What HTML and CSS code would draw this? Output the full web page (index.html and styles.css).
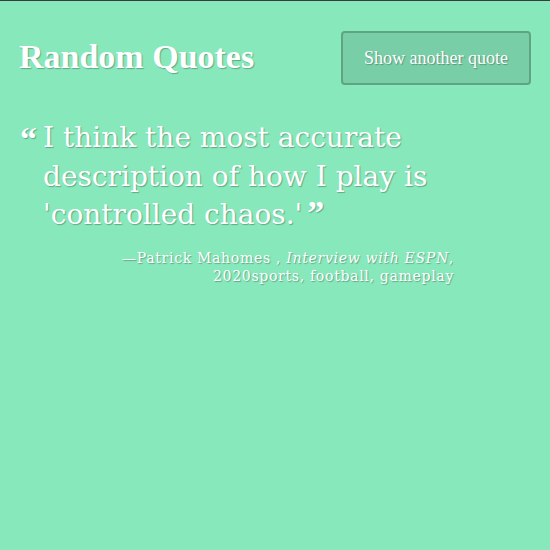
FILE: index.html
```html
<!DOCTYPE html>
<html lang="en">
<head>
<meta charset="utf-8">
<title>Random Quotes</title>
<link rel="stylesheet" href="styles.css">
</head>
<body>
<div class="page">
  <header class="top">
    <h1 class="title">Random Quotes</h1>
    <button class="btn" type="button">Show another quote</button>
  </header>
  <figure class="quote">
    <blockquote class="quote-body">
      <span class="mark mark-open">&ldquo;</span>
      <p class="quote-text">I think the most accurate description of how I play is 'controlled chaos.'<span class="mark mark-close">&rdquo;</span></p>
    </blockquote>
    <figcaption class="cite">&mdash;Patrick Mahomes , <em>Interview with ESPN</em>,<br>2020sports, football, gameplay</figcaption>
  </figure>
</div>
</body>
</html>
```

FILE: styles.css
```css
html, body {
  margin: 0;
  padding: 0;
}
body {
  background: #87e8bb;
  border-top: 1px solid #3b3b3b;
  min-height: 549px;
  color: #ffffff;
  font-family: "Liberation Serif", "Times New Roman", serif;
  text-shadow: 1px 1px 1px rgba(0, 0, 0, 0.28);
}
.page {
  padding: 28px 19px 0 19px;
}
.top {
  display: flex;
  justify-content: space-between;
  align-items: center;
}
.title {
  margin: 0;
  font-size: 34px;
  font-weight: bold;
  line-height: 40px;
}
.btn {
  width: 190px;
  height: 54px;
  margin-top: 2px;
  background: #78cea7;
  border: 2px solid #5fa583;
  border-radius: 4px;
  color: #ffffff;
  font-family: "Liberation Serif", "Times New Roman", serif;
  font-size: 18px;
  text-shadow: 1px 1px 1px rgba(0, 0, 0, 0.28);
  padding: 0;
}
.quote {
  margin: 34px 0 0 0;
  width: 435px;
}
.quote-body {
  margin: 0;
  display: flex;
}
.mark {
  font-family: "Liberation Serif", "Times New Roman", serif;
  font-weight: bold;
  font-size: 34px;
}
.mark-open {
  width: 23px;
  flex: none;
  line-height: 40px;
  margin-left: 1px;
}
.quote-text {
  margin: 0;
  font-family: "DejaVu Serif", Georgia, serif;
  font-size: 28px;
  line-height: 38.5px;
}
.mark-close {
  font-size: 34px;
  line-height: 20px;
  margin-left: 5px;
}
.cite {
  margin: 14px 0 0 0;
  text-align: right;
  font-family: "DejaVu Serif", Georgia, serif;
  font-size: 14px;
  letter-spacing: 0.7px;
  line-height: 18px;
}
```
